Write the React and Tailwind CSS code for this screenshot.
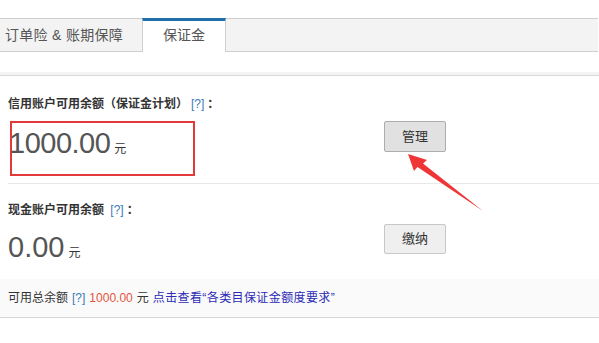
const font = { fontFamily: '"Liberation Sans", "Noto Sans CJK SC", sans-serif' };

function Help() {
  return <span className="text-[#3a7bb5] font-normal mx-[3px]">[?]</span>;
}

function Arrow() {
  return (
    <svg
      className="absolute left-0 top-0 pointer-events-none"
      width="599"
      height="343"
      viewBox="0 0 599 343"
    >
      <polygon
        points="408,154 427,160 423,163.5 483,211 417.5,167 414,171"
        fill="#ef3535"
      />
    </svg>
  );
}

export default function App() {
  return (
    <div
      className="relative w-[599px] h-[343px] bg-white overflow-hidden text-[#333]"
      style={font}
    >
      <div className="h-[18px]" />

      {/* Tabs */}
      <div className="flex h-[34px] w-[598px] border-y border-[#cfcfcf] bg-[#f3f3f3]">
        <div className="w-[142px] flex items-center pl-[5px] text-[14px] text-[#555] tracking-[0.3px]">
          订单险 &amp; 账期保障
        </div>
        <div className="w-[84px] -mt-px -mb-px h-[34px] flex items-center justify-center bg-white border-t-[3px] border-t-[#1e6ea9] border-x border-x-[#cfcfcf] text-[14px] text-[#555] pb-[2px]">
          保证金
        </div>
      </div>

      <div className="h-[20px]" />
      <div className="h-[3px] bg-[#f3f3f3]" />
      <div className="h-px bg-[#d9d9d9]" />

      {/* Credit account */}
      <div className="px-[8px] pt-[19px]">
        <div className="text-[12px] leading-[18px] font-bold">
          信用账户可用余额（保证金计划）<Help />：
        </div>
        <div className="mt-[8px] flex items-start">
          <div className="w-[376px]">
            <div className="ml-[2px] w-[185px] h-[55px] border-2 border-[#e23a3a]">
              <div className="-ml-[3px] mt-[6px] flex items-baseline">
                <span className="text-[29px] leading-[29px] text-[#555] tracking-[-0.5px]">1000.00</span>
                <span className="ml-[4px] text-[12px]">元</span>
              </div>
            </div>
          </div>
          <button className="w-[62px] h-[31px] rounded-[2px] border border-[#adadad] bg-[#e1e1e1] text-[13px] text-[#333]">
            管理
          </button>
        </div>
      </div>
      <div className="ml-[8px] mt-[7px] h-px bg-[#e8e8e8]" />

      {/* Cash account */}
      <div className="px-[8px] pt-[17px] h-[95px]">
        <div className="text-[12px] leading-[18px] font-bold">
          现金账户可用余额 <Help />：
        </div>
        <div className="flex items-start">
          <div className="w-[376px] mt-[14px] flex items-baseline">
            <span className="text-[29px] leading-[29px] text-[#555]">0.00</span>
            <span className="ml-[4px] text-[12px]">元</span>
          </div>
          <button className="mt-[5px] w-[62px] h-[30px] rounded-[2px] border border-[#c8c8c8] bg-[#efefef] text-[13px] text-[#333]">
            缴纳
          </button>
        </div>
      </div>

      {/* Summary */}
      <div className="h-[39px] bg-[#fafafa] border-b border-[#d6d6d6] flex items-center px-[8px] text-[12px]">
        <span>可用总余额</span>
        <span className="text-[#3a7bb5] mx-[4px]">[?]</span>
        <span className="text-[#e4533d]">1000.00</span>
        <span className="ml-[4px]">元</span>
        <span className="ml-[4px] text-[#2b2bb5] tracking-[0.4px]">点击查看“各类目保证金额度要求”</span>
      </div>

      <Arrow />
    </div>
  );
}
